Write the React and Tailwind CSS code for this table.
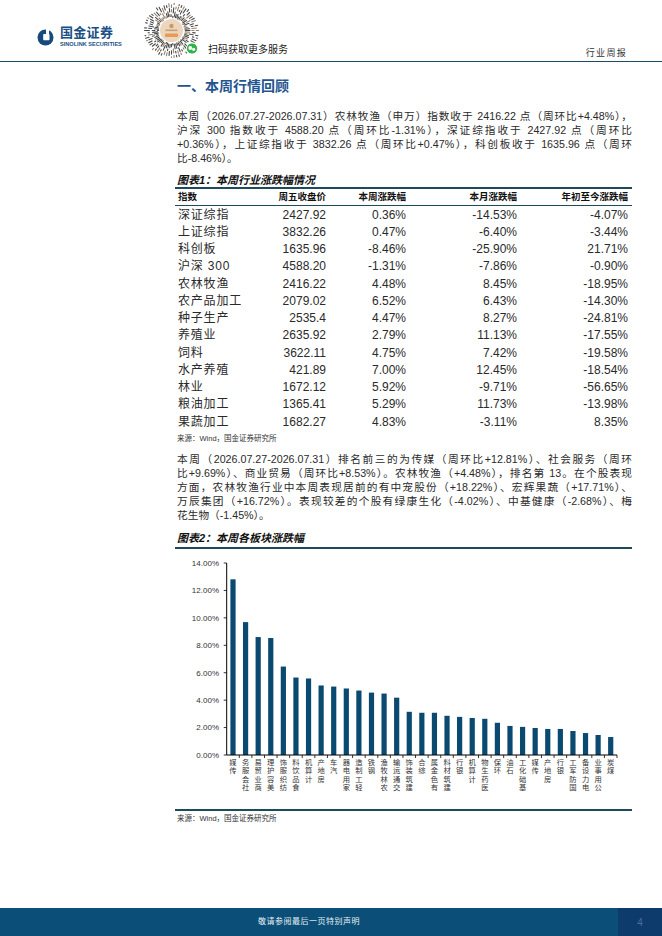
import React from "react";

const FONT = { fontFamily: '"Liberation Sans", "Noto Sans CJK SC", sans-serif' };

const tableRows = [
  ["深证综指", "2427.92", "0.36%", "-14.53%", "-4.07%"],
  ["上证综指", "3832.26", "0.47%", "-6.40%", "-3.44%"],
  ["科创板", "1635.96", "-8.46%", "-25.90%", "21.71%"],
  ["沪深 300", "4588.20", "-1.31%", "-7.86%", "-0.90%"],
  ["农林牧渔", "2416.22", "4.48%", "8.45%", "-18.95%"],
  ["农产品加工", "2079.02", "6.52%", "6.43%", "-14.30%"],
  ["种子生产", "2535.4", "4.47%", "8.27%", "-24.81%"],
  ["养殖业", "2635.92", "2.79%", "11.13%", "-17.55%"],
  ["饲料", "3622.11", "4.75%", "7.42%", "-19.58%"],
  ["水产养殖", "421.89", "7.00%", "12.45%", "-18.54%"],
  ["林业", "1672.12", "5.92%", "-9.71%", "-56.65%"],
  ["粮油加工", "1365.41", "5.29%", "11.73%", "-13.98%"],
  ["果蔬加工", "1682.27", "4.83%", "-3.11%", "8.35%"],
];

const bars = [
  ["传媒", 12.81], ["社会服务", 9.69], ["商业贸易", 8.6], ["美容护理", 8.53],
  ["纺织服饰", 6.45], ["食品饮料", 5.65], ["计算机", 5.58], ["房地产", 5.07],
  ["汽车", 4.99], ["家用电器", 4.85], ["轻工制造", 4.7], ["钢铁", 4.55],
  ["农林牧渔", 4.48], ["交通运输", 4.18], ["建筑装饰", 3.15], ["综合", 3.08],
  ["有色金属", 3.08], ["建筑材料", 2.86], ["银行", 2.78], ["计算机", 2.7],
  ["医药生物", 2.64], ["环保", 2.35], ["石油", 2.12], ["基础化工", 2.05],
  ["传媒", 1.97], ["房地产", 1.9], ["银行", 1.9], ["国防军工", 1.75],
  ["电力设备", 1.6], ["公用事业", 1.46], ["煤炭", 1.31],
];

const para1 = [
  "本周（2026.07.27-2026.07.31）农林牧渔（申万）指数收于 2416.22 点（周环比+4.48%），",
  "沪深 300 指数收于 4588.20 点（周环比-1.31%），深证综指收于 2427.92 点（周环比",
  "+0.36%），上证综指收于 3832.26 点（周环比+0.47%），科创板收于 1635.96 点（周环",
];
const para1Last = "比-8.46%）。";

const para2 = [
  "本周（2026.07.27-2026.07.31）排名前三的为传媒（周环比+12.81%）、社会服务（周环",
  "比+9.69%）、商业贸易（周环比+8.53%）。农林牧渔（+4.48%），排名第 13。在个股表现",
  "方面，农林牧渔行业中本周表现居前的有中宠股份（+18.22%）、宏辉果蔬（+17.71%）、",
  "万辰集团（+16.72%）。表现较差的个股有绿康生化（-4.02%）、中基健康（-2.68%）、梅",
];
const para2Last = "花生物（-1.45%）。";

function LogoIcon() {
  return (
    <svg width="17" height="17" viewBox="0 0 17 17">
      <circle cx="8.5" cy="8.5" r="8" fill="#174a7c" />
      <rect x="6.2" y="5" width="6.3" height="6.3" rx="0.8" fill="#ffffff" />
      <rect x="9" y="0" width="3" height="5.5" fill="#ffffff" />
    </svg>
  );
}

function QRCode() {
  const cx = 28.5;
  const cy = 29.5;
  let seed = 11;
  const rnd = () => {
    seed = (seed * 9301 + 49297) % 233280;
    return seed / 233280;
  };
  const segs = [];
  const N = 64;
  for (let i = 0; i < N; i++) {
    const a = (i / N) * Math.PI * 2;
    let r = 12.8 + rnd() * 1.5;
    while (r < 26.5) {
      const len = 1.2 + rnd() * 4;
      const r2 = Math.min(r + len, 27);
      segs.push(
        <line
          key={i + "-" + r.toFixed(2)}
          x1={cx + Math.cos(a) * r}
          y1={cy + Math.sin(a) * r}
          x2={cx + Math.cos(a) * r2}
          y2={cy + Math.sin(a) * r2}
          stroke={rnd() > 0.75 ? "#9a8270" : "#4a4a4a"}
          strokeWidth="1.1"
          strokeLinecap="round"
        />
      );
      r = r2 + 1.5 + rnd() * 3;
    }
  }
  return (
    <svg width="58" height="60" viewBox="0 0 58 60">
      {segs}
      <circle cx={cx} cy={cy} r="11.5" fill="#ecd6bd" />
      <circle cx={cx} cy={cy - 4.5} r="2.2" fill="#c99a6a" />
      <rect x={cx - 6} y={cy - 1} width="12" height="1.6" fill="#c8a07a" />
      <rect x={cx - 6.5} y={cy + 3} width="13" height="3.6" rx="1" fill="#e79a55" />
      <circle cx="49" cy="47.5" r="5.6" fill="#32b24a" stroke="#ffffff" strokeWidth="1" />
      <circle cx="47.3" cy="47" r="1.9" fill="#ffffff" />
      <circle cx="50.6" cy="48.3" r="1.6" fill="#ffffff" />
    </svg>
  );
}

function Chart() {
  const W = 457;
  const H = 260;
  const AX = 51.7;
  const AXEND = 442;
  const Y0 = 206;
  const PER = 192 / 14;
  const cw = (AXEND - AX) / bars.length;
  const ticks = [0, 2, 4, 6, 8, 10, 12, 14];
  return (
    <svg width={W} height={H} viewBox={`0 0 ${W} ${H}`} className="block">
      {ticks.map((t) => (
        <g key={t}>
          <text
            x="44"
            y={Y0 - t * PER + 2.8}
            textAnchor="end"
            fontSize="8"
            fill="#333333"
            fontFamily='"Liberation Sans", sans-serif'
          >
            {t.toFixed(2)}%
          </text>
          <line x1={AX - 3} x2={AX} y1={Y0 - t * PER} y2={Y0 - t * PER} stroke="#000" strokeWidth="0.8" />
        </g>
      ))}
      <line x1={AX} x2={AX} y1={Y0 - 14 * PER} y2={Y0} stroke="#000" strokeWidth="1" />
      {bars.map(([name, v], i) => {
        const xc = AX + (i + 0.5) * cw;
        const h = v * PER;
        const chars = name.split("").reverse();
        return (
          <g key={i}>
            <rect x={xc - 2.6} y={Y0 - h} width="5.2" height={h} fill="#0b4a70" />
            {chars.map((c, j) => (
              <text
                key={j}
                x={xc}
                y={213 + j * 8.35 + 2.8}
                textAnchor="middle"
                fontSize="7.3"
                fill="#333333"
                fontFamily='"Noto Sans CJK SC", sans-serif'
              >
                {c}
              </text>
            ))}
          </g>
        );
      })}
      {bars.map((_, i) => (
        <line
          key={"t" + i}
          x1={AX + (i + 1) * cw}
          x2={AX + (i + 1) * cw}
          y1={Y0}
          y2={Y0 + 3}
          stroke="#000"
          strokeWidth="0.8"
        />
      ))}
      <line x1={AX} x2={AXEND} y1={Y0} y2={Y0} stroke="#000" strokeWidth="1.2" />
    </svg>
  );
}

function JLine({ text }) {
  return (
    <div className="h-[14px] leading-[14px] overflow-hidden text-justify [text-align-last:justify]">
      {text}
    </div>
  );
}

export default function App() {
  return (
    <div className="w-[662px] h-[936px] bg-white flex flex-col overflow-hidden text-[#2a2a2a]" style={FONT}>
      {/* Header */}
      <header className="h-[62px] shrink-0 border-b-[1.5px] border-[#1d4a66] flex items-start">
        <div className="ml-[37px] mt-[26px] w-[90px] flex items-center gap-[6px]">
          <LogoIcon />
          <div className="flex flex-col">
            <span className="text-[13px] font-bold leading-[14px] text-[#1b4f86] tracking-[0.3px]">国金证券</span>
            <span className="text-[5.6px] font-bold leading-[8px] text-[#1b4f86] whitespace-nowrap">
              SINOLINK SECURITIES
            </span>
          </div>
        </div>
        <div className="ml-[16px] mt-[1px]">
          <QRCode />
        </div>
        <span className="ml-[7px] mt-[44px] text-[10px] leading-[12px] text-[#222]">扫码获取更多服务</span>
        <span className="ml-auto mr-[35px] mt-[47px] text-[9px] leading-[12px] tracking-[1.3px] text-[#333]">
          行业周报
        </span>
      </header>

      {/* Main */}
      <main className="flex-1 w-full pl-[175px]">
        <div className="w-[457px]">
          <h1 className="mt-[14px] pl-[2px] h-[20px] leading-[20px] text-[14px] font-bold text-[#1f5690]">
            一、本周行情回顾
          </h1>

          <div className="mt-[13px] pl-[2px] text-[10.7px]">
            {para1.map((l, i) => (
              <JLine key={i} text={l} />
            ))}
            <div className="h-[14px] leading-[14px]">{para1Last}</div>
          </div>

          <div className="mt-[8px] pl-[2px] h-[14px] leading-[14px] text-[11px] font-bold italic text-[#111]">
            图表1：本周行业涨跌幅情况
          </div>

          <div className="border-t-2 border-[#1d4b5e]">
            <div className="h-[17px] border-b border-[#1d4b5e] grid grid-cols-[80px_68px_80px_111px_111px] pl-[3px] items-center text-[9.5px] font-bold text-[#111] leading-[12px]">
              <span>指数</span>
              <span className="text-right">周五收盘价</span>
              <span className="text-right">本周涨跌幅</span>
              <span className="text-right">本月涨跌幅</span>
              <span className="text-right">年初至今涨跌幅</span>
            </div>
            {tableRows.map((r, i) => (
              <div
                key={i}
                className="h-[17.25px] grid grid-cols-[80px_68px_80px_111px_111px] pl-[3px] items-center text-[12px] leading-[14px]"
              >
                <span className="tracking-[0.8px]">{r[0]}</span>
                <span className="text-right">{r[1]}</span>
                <span className="text-right">{r[2]}</span>
                <span className="text-right">{r[3]}</span>
                <span className="text-right">{r[4]}</span>
              </div>
            ))}
          </div>

          <div className="mt-[4px] pl-[2px] h-[10px] leading-[10px] text-[7.5px] text-[#333]">
            来源：Wind，国金证券研究所
          </div>

          <div className="mt-[8px] pl-[2px] text-[10.7px]">
            {para2.map((l, i) => (
              <JLine key={i} text={l} />
            ))}
            <div className="h-[14px] leading-[14px]">{para2Last}</div>
          </div>

          <div className="mt-[9px] pl-[2px] h-[14px] leading-[14px] text-[11px] font-bold italic text-[#111]">
            图表2：本周各板块涨跌幅
          </div>

          <div className="mt-[2px] border-t-2 border-[#1d4b5e]">
            <Chart />
          </div>

          <div className="border-t-2 border-[#1d4b5e]" />
          <div className="mt-[3px] pl-[2px] h-[10px] leading-[10px] text-[7.5px] text-[#333]">
            来源：Wind，国金证券研究所
          </div>
        </div>
      </main>

      {/* Footer */}
      <footer className="h-[28px] shrink-0 flex">
        <div className="flex-1 bg-[#0b4e77] flex items-center justify-center text-[8px] text-[#e6eef4] tracking-[0.5px]">
          敬请参阅最后一页特别声明
        </div>
        <div className="w-[44px] bg-[#0c3b6c] flex items-center justify-center text-[10px] text-[#4f6d98]">4</div>
      </footer>
    </div>
  );
}
